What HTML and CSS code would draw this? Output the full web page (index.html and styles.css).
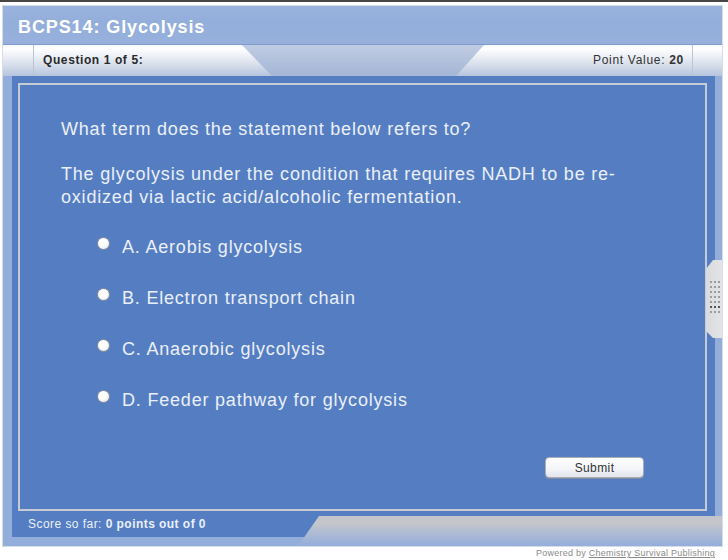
FILE: index.html
```html
<!DOCTYPE html>
<html lang="en">
<head>
  <meta charset="UTF-8">
  <title>BCPS14: Glycolysis</title>
  <link rel="stylesheet" href="styles.css">
</head>
<body>

  <div class="topline"></div>

  <div class="frame">
    <div class="titlebar">BCPS14: Glycolysis</div>

    <div class="toolbar">
      <div class="tab tab-left">
        <div class="tab-cap"></div>
        <div class="tab-label">Question 1 of 5:</div>
      </div>
      <div class="tab tab-right">
        <div class="tab-label">Point Value: <b>20</b></div>
        <div class="tab-cap"></div>
      </div>
    </div>

    <div class="content">
      <div class="main">
        <div class="panel">
          <div class="question">
            <p>What term does the statement below refers to?</p>
            <p>The glycolysis under the condition that requires NADH to be re-<br>oxidized via lactic acid/alcoholic fermentation.</p>
          </div>

          <div class="options">
            <label class="option"><span class="radio"></span>A. Aerobis glycolysis</label>
            <label class="option"><span class="radio"></span>B. Electron transport chain</label>
            <label class="option"><span class="radio"></span>C. Anaerobic glycolysis</label>
            <label class="option"><span class="radio"></span>D. Feeder pathway for glycolysis</label>
          </div>

          <div class="actions">
            <button class="submit">Submit</button>
          </div>
        </div>
        <div class="score">Score so far: <b>0 points out of 0</b></div>
      </div>
    </div>

    <!-- slide-out grip on the right edge -->
    <div class="grip">
      <svg width="16" height="78" viewBox="0 0 16 78">
        <g fill="#9a9ca0">
          <rect x="4" y="21" width="2" height="2"/><rect x="8" y="21" width="2" height="2"/><rect x="12" y="21" width="2" height="2"/>
          <rect x="4" y="26" width="2" height="2"/><rect x="8" y="26" width="2" height="2"/><rect x="12" y="26" width="2" height="2"/>
          <rect x="4" y="31" width="2" height="2"/><rect x="8" y="31" width="2" height="2"/><rect x="12" y="31" width="2" height="2"/>
          <rect x="4" y="36" width="2" height="2"/><rect x="8" y="36" width="2" height="2"/><rect x="12" y="36" width="2" height="2"/>
          <rect x="4" y="41" width="2" height="2"/><rect x="8" y="41" width="2" height="2"/><rect x="12" y="41" width="2" height="2"/>
          <rect x="4" y="51" width="2" height="2"/><rect x="8" y="51" width="2" height="2"/><rect x="12" y="51" width="2" height="2"/>
        </g>
        <g fill="#55575c">
          <rect x="4" y="46" width="2" height="2"/><rect x="8" y="46" width="2" height="2"/><rect x="12" y="46" width="2" height="2"/>
        </g>
      </svg>
    </div>

    <div class="bottom-tab"></div>
  </div>

  <div class="powered">Powered by <a href="#">Chemistry Survival Publishing</a></div>

</body>
</html>
```

FILE: styles.css
```css
body {
  margin: 0;
  font-family: "Liberation Sans", Arial, sans-serif;
  background: #ffffff;
  width: 728px;
}

.topline {
  height: 2px;
  background: #474747;
}

.frame {
  position: relative;
  box-sizing: border-box;
  width: 721px;
  margin: 3px 0 0 2px;
  border: 1px solid #d6dce8;
  background: #94aedb;
}

.titlebar {
  height: 38px;
  line-height: 43px;
  padding-left: 15px;
  font-size: 18px;
  font-weight: bold;
  letter-spacing: 0.9px;
  color: #ffffff;
  background: linear-gradient(#9ab3de, #94aedb 40%, #97b0dc);
}

.toolbar {
  display: flex;
  justify-content: space-between;
  height: 31px;
  border-top: 1px solid #7f9bcb;
  background: linear-gradient(#c0cce2, #b2c1dc 50%, #a4b6d6);
}

.tab {
  display: flex;
  height: 31px;
  background: linear-gradient(#f6f8fb 0%, #ffffff 12%, #e9edf4 40%, #d6deeb 65%, #c3cfe3 85%, #b5c4de 100%);
}

.tab-left {
  width: 269px;
  clip-path: polygon(0 0, 239px 0, 100% 100%, 0 100%);
}

.tab-right {
  width: 266px;
  justify-content: flex-end;
  clip-path: polygon(28px 0, 100% 0, 100% 100%, 0 100%);
}

.tab-cap {
  width: 30px;
}

.tab-left .tab-cap {
  border-right: 1px solid #bac4d6;
}

.tab-right .tab-cap {
  width: 29px;
  border-left: 1px solid #bac4d6;
}

.tab-label {
  line-height: 31px;
  font-size: 12px;
  color: #2a2a2a;
}

.tab-left .tab-label {
  padding-left: 9px;
  font-weight: bold;
  letter-spacing: 0.6px;
}

.tab-right .tab-label {
  padding-right: 8px;
  letter-spacing: 0.7px;
  color: #333;
}

.content {
  padding: 0 7px 9px 9px;
}

.main {
  background: #557ec2;
  padding: 7px 8px 0 6px;
}

.panel {
  box-sizing: border-box;
  height: 428px;
  border: 2px solid #c6cbd5;
  padding: 33px 0 0 41px;
  color: #eaeff9;
  font-size: 18px;
  line-height: 23px;
  letter-spacing: 0.8px;
}

.question p {
  margin: 0 0 22px;
}

.question p:last-child {
  margin-bottom: 0;
}

.options {
  display: flex;
  flex-direction: column;
  gap: 28px;
  margin-top: 27px;
  padding-left: 36px;
}

.option {
  display: flex;
  align-items: flex-start;
  gap: 12px;
  height: 23px;
}

.radio {
  width: 13px;
  height: 13px;
  margin-top: 1px;
  border-radius: 50%;
  box-sizing: border-box;
  border: 1px solid #8a9099;
  background: radial-gradient(circle at 45% 40%, #ffffff 40%, #e4e6ea 80%, #c9ccd2);
}

.actions {
  display: flex;
  justify-content: flex-end;
  margin-top: 45px;
  padding-right: 61px;
}

.submit {
  width: 99px;
  height: 21px;
  padding: 0;
  font-family: "Liberation Sans", Arial, sans-serif;
  font-size: 12px;
  letter-spacing: 0.4px;
  color: #333;
  border: 1px solid #a9adb5;
  border-radius: 4px;
  background: linear-gradient(#ffffff, #f2f4f8 60%, #e2e5ec);
  box-shadow: 0 1px 0 #7f8aa0;
}

.score {
  height: 26px;
  line-height: 27px;
  padding-left: 10px;
  font-size: 12px;
  letter-spacing: 0.45px;
  color: #eaeff9;
}

.grip {
  position: absolute;
  top: 254px;
  right: 0;
  width: 16px;
  height: 78px;
  background: linear-gradient(90deg, #d9dadd, #e3e4e6);
  clip-path: polygon(7px 0, 100% 0, 100% 100%, 7px 100%, 0 71px, 0 9px);
}

.grip svg {
  display: block;
}

.bottom-tab {
  position: absolute;
  left: 295px;
  right: 0;
  bottom: 0;
  height: 30px;
  background: linear-gradient(#c3c5ca 0%, #c4c6cb 25%, #b6bfd0 45%, #a9b8d4 65%, #9db2d9 85%, #94aedb 100%);
  clip-path: polygon(21px 0, 100% 0, 100% 100%, 0 100%);
}

.powered {
  margin-top: 1px;
  padding-right: 13px;
  text-align: right;
  font-size: 9px;
  letter-spacing: 0.25px;
  color: #8a8a8a;
}

.powered a {
  color: #8a8a8a;
}
```
